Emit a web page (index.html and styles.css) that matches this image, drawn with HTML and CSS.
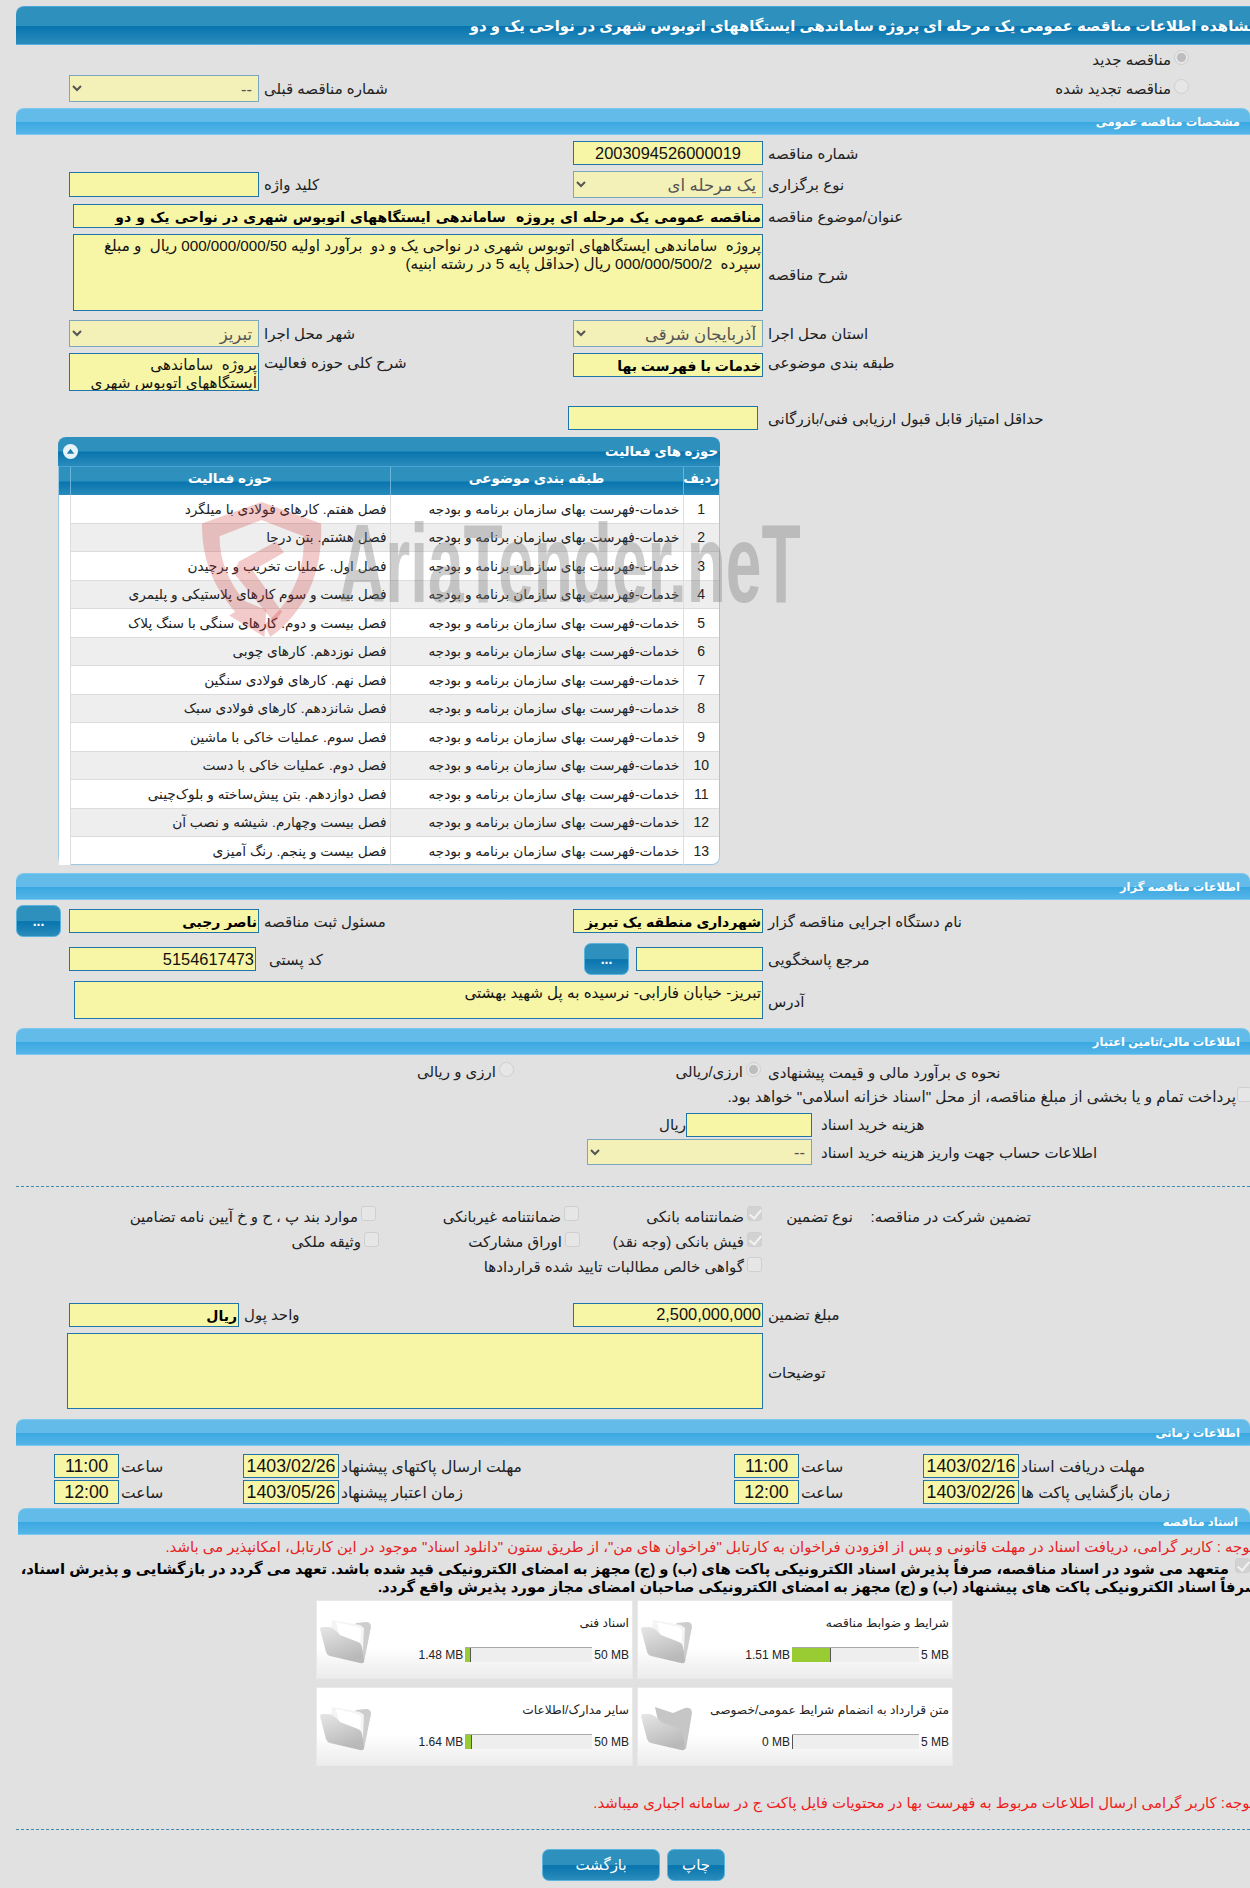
FILE: index.html
```html
<!DOCTYPE html>
<html lang="fa">
<head>
<meta charset="utf-8">
<title>مشاهده اطلاعات مناقصه</title>
<link rel="stylesheet" href="styles.css">
</head>
<body>
<div class="page">
  <h1 class="title-bar">مشاهده اطلاعات مناقصه عمومی یک مرحله ای پروژه ساماندهی ایستگاههای اتوبوس شهری در نواحی یک و دو</h1>

  <div class="top">
    <div class="top-prev">
      <select class="sel w190" disabled><option>--</option></select>
      <span class="lab">شماره مناقصه قبلی</span>
    </div>
    <div class="top-radios">
      <label class="opt"><input type="radio" class="rad" checked disabled><span>مناقصه جدید</span></label>
      <label class="opt"><input type="radio" class="rad" disabled><span>مناقصه تجدید شده</span></label>
    </div>
  </div>

  <h2 class="bar mt6">مشخصات مناقصه عمومی</h2>

  <div class="row h24 mt6">
    <span></span><span></span><span></span>
    <input class="inp center" value="2003094526000019" readonly>
    <span class="lab">شماره مناقصه</span>
  </div>
  <div class="row h27 mt6">
    <span></span>
    <input class="inp h25" readonly>
    <span class="lab">کلید واژه</span>
    <select class="sel" disabled><option>یک مرحله ای</option></select>
    <span class="lab">نوع برگزاری</span>
  </div>
  <div class="row h24 mt6">
    <span></span>
    <input class="inp bold long-title span3 ml4" value="مناقصه عمومی یک مرحله ای پروژه  ساماندهی ایستگاههای اتوبوس شهری در نواحی یک و دو" readonly>
    <span class="lab">عنوان/موضوع مناقصه</span>
  </div>
  <div class="row h77 mt6">
    <span></span>
    <textarea class="inp area span3 ml4" readonly>پروژه  ساماندهی ایستگاههای اتوبوس شهری در نواحی یک و دو  برآورد اولیه 000/000/000/50 ریال  و مبلغ سپرده  000/000/500/2 ریال (حداقل پایه 5 در رشته ابنیه)</textarea>
    <span class="lab lab-low">شرح مناقصه</span>
  </div>
  <div class="row h27 mt9">
    <span></span>
    <select class="sel" disabled><option>تبریز</option></select>
    <span class="lab">شهر محل اجرا</span>
    <select class="sel" disabled><option>آذربایجان شرقی</option></select>
    <span class="lab">استان محل اجرا</span>
  </div>
  <div class="row h38 mt6">
    <span></span>
    <textarea class="inp area" readonly>پروژه  ساماندهی
ایستگاههای اتوبوس شهری</textarea>
    <span class="lab top-lab">شرح کلی حوزه فعالیت</span>
    <input class="inp bold top-inp" value="خدمات با فهرست بها" readonly>
    <span class="lab top-lab">طبقه بندی موضوعی</span>
  </div>
  <div class="row h24 mt15">
    <span></span><span></span><span></span>
    <input class="inp shift5" readonly>
    <span class="lab">حداقل امتیاز قابل قبول ارزیابی فنی/بازرگانی</span>
  </div>

  <section class="panel">
    <div class="panel-title">
      <span class="collapse"><svg viewBox="0 0 14 14" width="15" height="15"><circle cx="7" cy="7" r="7" fill="#e8f3f8"/><path d="M3.5 9 7 4.5 10.5 9z" fill="#1b7fb2"/></svg></span>
      <span>حوزه های فعالیت</span>
    </div>
    <table class="grid">
      <colgroup><col class="c-blank"><col class="c-act"><col class="c-cat"><col class="c-num"></colgroup>
      <thead><tr><th></th><th>حوزه فعالیت</th><th>طبقه بندی موضوعی</th><th>ردیف</th></tr></thead>
      <tbody>
        <tr><td></td><td>فصل هفتم. کارهای فولادی با میلگرد</td><td>خدمات-فهرست بهای سازمان برنامه و بودجه</td><td class="num">1</td></tr>
        <tr><td></td><td>فصل هشتم. بتن درجا</td><td>خدمات-فهرست بهای سازمان برنامه و بودجه</td><td class="num">2</td></tr>
        <tr><td></td><td>فصل اول. عملیات تخریب و برچیدن</td><td>خدمات-فهرست بهای سازمان برنامه و بودجه</td><td class="num">3</td></tr>
        <tr><td></td><td>فصل بیست و سوم کارهای پلاستیکی و پلیمری</td><td>خدمات-فهرست بهای سازمان برنامه و بودجه</td><td class="num">4</td></tr>
        <tr><td></td><td>فصل بیست و دوم. کارهای سنگی با سنگ پلاک</td><td>خدمات-فهرست بهای سازمان برنامه و بودجه</td><td class="num">5</td></tr>
        <tr><td></td><td>فصل نوزدهم. کارهای چوبی</td><td>خدمات-فهرست بهای سازمان برنامه و بودجه</td><td class="num">6</td></tr>
        <tr><td></td><td>فصل نهم. کارهای فولادی سنگین</td><td>خدمات-فهرست بهای سازمان برنامه و بودجه</td><td class="num">7</td></tr>
        <tr><td></td><td>فصل شانزدهم. کارهای فولادی سبک</td><td>خدمات-فهرست بهای سازمان برنامه و بودجه</td><td class="num">8</td></tr>
        <tr><td></td><td>فصل سوم. عملیات خاکی با ماشین</td><td>خدمات-فهرست بهای سازمان برنامه و بودجه</td><td class="num">9</td></tr>
        <tr><td></td><td>فصل دوم. عملیات خاکی با دست</td><td>خدمات-فهرست بهای سازمان برنامه و بودجه</td><td class="num">10</td></tr>
        <tr><td></td><td>فصل دوازدهم. بتن پیش‌ساخته و بلوک‌چینی</td><td>خدمات-فهرست بهای سازمان برنامه و بودجه</td><td class="num">11</td></tr>
        <tr><td></td><td>فصل بیست وچهارم. شیشه و نصب آن</td><td>خدمات-فهرست بهای سازمان برنامه و بودجه</td><td class="num">12</td></tr>
        <tr><td></td><td>فصل بیست و پنجم. رنگ آمیزی</td><td>خدمات-فهرست بهای سازمان برنامه و بودجه</td><td class="num">13</td></tr>
      </tbody>
    </table>
    <div class="watermark" aria-hidden="true">
      <svg class="wm-shield" viewBox="0 0 126 150" width="123" height="135" preserveAspectRatio="none"><path d="M63 0 124 24C126 75 110 120 72 150L66 136C96 110 108 72 106 38L63 20 20 38C20 66 30 90 46 110L68 120 66 150 30 126 36 122C12 92 2 62 2 24Z" fill="#c33" opacity=".26"/><path d="M40 66 78 44 86 56 54 76 84 122 76 134 34 78Z" fill="#c33" opacity=".26"/></svg>
      <span class="wm-text">AriaTender.neT</span>
    </div>
  </section>

  <h2 class="bar mt8">اطلاعات مناقصه گزار</h2>

  <div class="row h32 mt5">
    <button class="btn dots" type="button">...</button>
    <input class="inp bold" value="ناصر رجبی" readonly>
    <span class="lab">مسئول ثبت مناقصه</span>
    <input class="inp bold" value="شهرداری منطقه یک تبریز" readonly>
    <span class="lab">نام دستگاه اجرایی مناقصه گزار</span>
  </div>
  <div class="row h32 mt6">
    <span></span>
    <input class="inp w187" value="5154617473" readonly>
    <span class="lab pl8">کد پستی</span>
    <div class="ref-wrap">
      <button class="btn dots" type="button">...</button>
      <input class="inp w127" readonly>
    </div>
    <span class="lab">مرجع پاسخگویی</span>
  </div>
  <div class="row h38 mt6">
    <span></span>
    <textarea class="inp area span3 ml5" readonly>تبریز- خیابان فارابی- نرسیده به پل شهید بهشتی</textarea>
    <span class="lab lab-low">آدرس</span>
  </div>

  <h2 class="bar mt9">اطلاعات مالی/تامین اعتبار</h2>

  <div class="fin-row">
    <label class="opt fin-a"><input type="radio" class="rad" disabled><span>ارزی و ریالی</span></label>
    <label class="opt fin-b"><input type="radio" class="rad" checked disabled><span>ارزی/ریالی</span></label>
    <span class="lab">نحوه ی برآورد مالی و قیمت پیشنهادی</span>
  </div>
  <div class="treasury">
    <input type="checkbox" class="chk" disabled>
    <span>پرداخت تمام و یا بخشی از مبلغ مناقصه، از محل "اسناد خزانه اسلامی" خواهد بود.</span>
  </div>
  <div class="fee-row mt12">
    <span class="unit">ریال</span>
    <input class="inp w126" readonly>
    <span class="lab pl9">هزینه خرید اسناد</span>
  </div>
  <div class="acc-row">
    <select class="sel w225" disabled><option>--</option></select>
    <span class="lab pl9">اطلاعات حساب جهت واریز هزینه خرید اسناد</span>
  </div>

  <hr class="dash dash-a">

  <div class="guar">
    <span>تضمین شرکت در مناقصه:</span>
    <span>نوع تضمین</span>
    <label class="opt"><input type="checkbox" class="chk" checked disabled><span>ضمانتنامه بانکی</span></label>
    <label class="opt"><input type="checkbox" class="chk" disabled><span>ضمانتنامه غیربانکی</span></label>
    <label class="opt"><input type="checkbox" class="chk" disabled><span>موارد بند پ ، ح و خ آیین نامه تضامین</span></label>
  </div>
  <div class="guar">
    <span></span><span></span>
    <label class="opt"><input type="checkbox" class="chk" checked disabled><span>فیش بانکی (وجه نقد)</span></label>
    <label class="opt nudge1"><input type="checkbox" class="chk" disabled><span>اوراق مشارکت</span></label>
    <label class="opt nudge3"><input type="checkbox" class="chk" disabled><span>وثیقه ملکی</span></label>
  </div>
  <div class="guar">
    <span></span><span></span>
    <label class="opt wide"><input type="checkbox" class="chk" disabled><span>گواهی خالص مطالبات تایید شده قراردادها</span></label>
  </div>

  <div class="row h25 mt22">
    <span></span>
    <input class="inp bold w170" value="ریال" readonly>
    <span class="lab pull20">واحد پول</span>
    <input class="inp" value="2,500,000,000" readonly>
    <span class="lab">مبلغ تضمین</span>
  </div>
  <div class="row h76 mt6">
    <span></span>
    <textarea class="inp area span3 desc" readonly></textarea>
    <span class="lab lab-low">توضیحات</span>
  </div>

  <h2 class="bar mt10">اطلاعات زمانی</h2>

  <div class="time-row mt8">
    <input class="inp center" value="11:00" readonly><span class="lab">ساعت</span>
    <input class="inp center" value="1403/02/26" readonly><span class="lab">مهلت ارسال پاکتهای پیشنهاد</span>
    <input class="inp center" value="11:00" readonly><span class="lab">ساعت</span>
    <input class="inp center" value="1403/02/16" readonly><span class="lab">مهلت دریافت اسناد</span>
  </div>
  <div class="time-row mt2">
    <input class="inp center" value="12:00" readonly><span class="lab">ساعت</span>
    <input class="inp center" value="1403/05/26" readonly><span class="lab">زمان اعتبار پیشنهاد</span>
    <input class="inp center" value="12:00" readonly><span class="lab">ساعت</span>
    <input class="inp center" value="1403/02/26" readonly><span class="lab">زمان بازگشایی پاکت ها</span>
  </div>

  <h2 class="bar bar-docs">اسناد مناقصه</h2>

  <p class="note red-a">توجه : کاربر گرامی، دریافت اسناد در مهلت قانونی و پس از افزودن فراخوان به کارتابل "فراخوان های من"، از طریق ستون "دانلود اسناد" موجود در این کارتابل، امکانپذیر می باشد.</p>
  <div class="pledge">
    <input type="checkbox" class="chk" checked disabled>
    <span>متعهد می شود در اسناد مناقصه، صرفاً پذیرش اسناد الکترونیکی پاکت های (ب) و (ج) مجهز به امضای الکترونیکی قید شده باشد. تعهد می گردد در بازگشایی و پذیرش اسناد،</span>
  </div>
  <p class="note pledge-2">صرفاً اسناد الکترونیکی پاکت های پیشنهاد (ب) و (ج) مجهز به امضای الکترونیکی صاحبان امضای مجاز مورد پذیرش واقع گردد.</p>

  <div class="files">
    <article class="card">
      <svg class="folder" viewBox="0 0 52 46" width="52" height="46"><use href="#folder-full"/></svg>
      <div class="card-body">
        <div class="card-title">اسناد فنی</div>
        <div class="prog"><span>1.48 MB</span><span class="track"><span class="fill f1"></span></span><span>50 MB</span></div>
      </div>
    </article>
    <article class="card">
      <svg class="folder" viewBox="0 0 52 46" width="52" height="46"><use href="#folder-full"/></svg>
      <div class="card-body">
        <div class="card-title">شرایط و ضوابط مناقصه</div>
        <div class="prog"><span>1.51 MB</span><span class="track"><span class="fill f2"></span></span><span>5 MB</span></div>
      </div>
    </article>
    <article class="card">
      <svg class="folder" viewBox="0 0 52 46" width="52" height="46"><use href="#folder-full"/></svg>
      <div class="card-body">
        <div class="card-title">سایر مدارک/اطلاعات</div>
        <div class="prog"><span>1.64 MB</span><span class="track"><span class="fill f3"></span></span><span>50 MB</span></div>
      </div>
    </article>
    <article class="card">
      <svg class="folder" viewBox="0 0 52 46" width="52" height="46"><use href="#folder-empty"/></svg>
      <div class="card-body">
        <div class="card-title">متن قرارداد به انضمام شرایط عمومی/خصوصی</div>
        <div class="prog"><span>0 MB</span><span class="track"><span class="fill f0"></span></span><span>5 MB</span></div>
      </div>
    </article>
  </div>

  <p class="note red-b">توجه: کاربر گرامی ارسال اطلاعات مربوط به فهرست بها در محتویات فایل پاکت ج در سامانه اجباری میباشد.</p>

  <hr class="dash dash-b">

  <div class="actions">
    <button class="btn act-back" type="button">بازگشت</button>
    <button class="btn act-print" type="button">چاپ</button>
  </div>
</div>

<svg class="defs" width="0" height="0" aria-hidden="true">
  <defs>
    <linearGradient id="fg" x1="0" y1="0" x2="0.4" y2="1"><stop offset="0" stop-color="#e6e6e6"/><stop offset="1" stop-color="#b9b9b9"/></linearGradient>
    <symbol id="folder-full" viewBox="0 0 52 46">
      <path d="M36 5 46 4Q51 4 51 9L44 44 20 30Z" fill="#cdcdcd"/>
      <path d="M12 2 40 7 44 10 43 32 30 40 10 20Z" fill="#f4f4f4"/>
      <path d="M16 4 38 9 41 12 40 30 20 20Z" fill="#fff"/>
      <path d="M0 11Q0 9 3 9L9 9Q14 10 20 17L38 24Q41 25 42 29L44 43Q44 46 40 45L10 38Q7 37 6 34Z" fill="url(#fg)"/>
    </symbol>
    <symbol id="folder-empty" viewBox="0 0 52 46">
      <path d="M14 2 32 8 44 3Q51 2 51 8L45 44 20 30Z" fill="#c6c6c6"/>
      <path d="M0 11Q0 9 3 9L9 9Q14 10 20 17L38 24Q41 25 42 29L44 43Q44 46 40 45L10 38Q7 37 6 34Z" fill="url(#fg)"/>
    </symbol>
  </defs>
</svg>
</body>
</html>
```

FILE: styles.css
```css
* { box-sizing: border-box; }
html, body { margin: 0; padding: 0; background: #e1e1e1; }
body { font-family: "Liberation Sans", "DejaVu Sans", sans-serif; font-size: 15px; color: #222; }
.page { position: relative; width: 1250px; height: 1888px; overflow: hidden; padding-top: 6px; background: #e1e1e1; }
p, h1, h2 { margin: 0; }

.title-bar {
  width: 1250px; height: 39px; margin-left: 16px; padding: 0 8px 0 0;
  direction: rtl; white-space: nowrap; line-height: 38px;
  font-size: 14.85px; font-weight: bold; color: #fff;
  border-top-left-radius: 8px; border-top: 1px solid #4aa6d6; border-bottom: 1px solid #57afe0;
  background: linear-gradient(#2e90bd 0, #2e90bd 50%, #0874ae 52%, #2a8cbb 100%);
}
.bar {
  width: 1234px; height: 27px; margin-left: 16px; padding: 0 10px;
  direction: rtl; line-height: 27px; font-size: 11.5px; font-weight: bold; color: #fff;
  border-radius: 8px 8px 0 0; border-top: 1px solid #7cc8ee; border-bottom: 1px solid #7cc8ee;
  background: linear-gradient(#63bbe9 0, #63bbe9 50%, #3aa8e1 53%, #55b5e8 100%);
}
.bar-docs { width: 1232px; margin-left: 18px; margin-top: 4px; padding-right: 12px; }

.mt2 { margin-top: 2px; } .mt5 { margin-top: 5px; } .mt6 { margin-top: 6px; } .mt8 { margin-top: 8px; }
.mt9 { margin-top: 9px; } .mt10 { margin-top: 10px; } .mt12 { margin-top: 12px; } .mt15 { margin-top: 15px; } .mt22 { margin-top: 22px; }

.lab { direction: rtl; text-align: left; white-space: nowrap; padding: 1px 0 0 5px; font-size: 15px; color: #222; unicode-bidi: plaintext; }
.lab-low { padding-top: 4px; }
.pull20 { margin-left: -20px; }
.row {
  display: grid; grid-template-columns: 53px 190px 314px 190px 1fr;
  margin-left: 16px; align-items: center;
}
.h24 { height: 24px; } .h25 { height: 25px; } .h27 { height: 27px; } .h32 { height: 32px; } .h38 { height: 38px; } .h76 { height: 76px; } .h77 { height: 77px; }

.inp {
  display: block; width: 100%; height: 24px; margin: 0; padding: 0 1px;
  direction: rtl; font: 16.4px "Liberation Sans", "DejaVu Sans", sans-serif; color: #111;
  background: #f7f5a6; border: 1px solid #1f75aa; border-radius: 0; outline: 0;
}
.row > .inp.h25 { height: 25px; }
.bold { font-weight: bold; color: #000; font-size: 14px; padding-top: 2px; }
.long-title { word-spacing: 1.2px; }
.center { text-align: center; direction: ltr; }
.area { height: 100%; resize: none; overflow: hidden; font-size: 15.2px; line-height: 18px; padding-top: 2px; }
.span3 { grid-column: span 3; width: auto; }
.row > .span3 { justify-self: stretch; }
.ml4 { margin-left: 4px; } .ml5 { margin-left: 5px; }
.desc { margin-left: -2px; }
.shift5 { margin-left: -5px; width: 190px; }
.w187 { width: 187px; } .w170 { width: 170px; } .w126 { width: 126px; } .w127 { width: 127px; }
.top-lab { align-self: start; padding-top: 1px; }
.top-inp { align-self: start; }
.pl8 { padding-left: 10px; } .pl9 { padding-left: 9px; }

.sel {
  display: block; width: 100%; height: 27px; margin: 0; padding: 0 2px;
  direction: rtl; font: 16.5px "Liberation Sans", "DejaVu Sans", sans-serif; color: #555; opacity: 1;
  background-color: #f3f0b8; border: 1px solid #7ba6bf; border-radius: 0;
}
.sel.w190 { width: 190px; } .sel.w225 { width: 225px; }

.rad, .chk {
  appearance: none; -webkit-appearance: none; flex: none; position: relative; margin: 0;
  width: 15px; height: 15px; background: #e6e6e6; border: 1px solid #cfcfcf;
}
.rad { border-radius: 50%; top: -3px; }
.rad:checked::after { content: ""; position: absolute; left: 2px; top: 2px; width: 9px; height: 9px; border-radius: 50%; background: #bdbdbd; }
.chk { border-radius: 3px; top: -3px; }
.chk:checked { background: #d2d2d2; }
.chk:checked::after { content: ""; position: absolute; left: 4px; top: 0; width: 5px; height: 10px; border: solid #f2f2f2; border-width: 0 2px 2px 0; transform: rotate(40deg); }
.opt { display: inline-flex; align-items: center; gap: 3px; direction: rtl; white-space: nowrap; font-size: 15px; }

.top { display: flex; justify-content: space-between; align-items: flex-end; height: 49px; margin-top: 8px; padding-left: 69px; }
.top-prev { display: flex; align-items: center; }
.top-radios { display: flex; flex-direction: column; align-items: flex-start; gap: 11px; direction: rtl; padding-right: 61px; padding-bottom: 4px; }

.panel { position: relative; width: 662px; height: 428px; margin: 7px 0 0 58px; border: 1px solid #9cc9e4; border-top: 0; border-radius: 8px; background: #fff; }
.panel-title {
  display: flex; justify-content: space-between; align-items: center; height: 29px; margin: 0 -1px; padding: 0 2px 0 5px;
  font-size: 13.3px; font-weight: bold; color: #fff; direction: ltr;
  border-radius: 8px 8px 0 0; background: linear-gradient(#2e90bd 0, #2e90bd 48%, #0874ae 52%, #2a8cbb 100%);
}
.panel-title > span:last-child { direction: rtl; }
.collapse { display: flex; }
.grid { width: 660px; table-layout: fixed; border-collapse: collapse; direction: ltr; }
.c-blank { width: 11px; } .c-act { width: 320px; } .c-cat { width: 293px; } .c-num { width: 36px; }
.grid th {
  height: 28px; padding: 0 0 5px; direction: rtl; color: #fff; font-size: 13.5px; font-weight: bold; text-align: center;
  border-left: 1px solid #6ab2d8; border-top: 1px solid #4aa6d6;
  background: linear-gradient(#2e90bd 0, #2e90bd 48%, #0874ae 52%, #2a8cbb 100%);
}
.grid th:first-child { border-left: 0; }
.grid td { height: 28.5px; padding: 0 3px; direction: rtl; text-align: right; white-space: nowrap; overflow: hidden; font-size: 13.7px; color: #222; border-left: 1px solid #dedede; border-bottom: 1px solid #dcdcdc; }
.grid tbody tr:nth-child(even) td { background: #eeeeee; }
.grid tbody tr td:first-child { background: #fff; border-left: 0; border-bottom: 0; }
.grid td.num { text-align: center; font-size: 14px; }
.watermark { position: absolute; left: 141px; top: 65px; width: 620px; height: 150px; pointer-events: none; }
.wm-shield { position: absolute; left: 0; top: 0; }
.wm-text { position: absolute; left: 139px; top: 6px; font: bold 112px/1 "Liberation Sans Narrow", "Liberation Sans", sans-serif; color: rgba(120,120,120,.36); white-space: nowrap; transform: scaleX(.572); transform-origin: 0 0; }

.btn {
  height: 32px; padding: 0; font: 13px "Liberation Sans", "DejaVu Sans", sans-serif; color: #fff; border: 1px solid #5bb4de; border-radius: 7px;
  background: linear-gradient(#2e90bd 0, #2e90bd 50%, #0874ae 52%, #2a8cbb 100%);
}
.dots { width: 45px; font-weight: bold; font-size: 14px; flex: none; }
.ref-wrap { display: flex; align-items: center; gap: 7px; padding-left: 11px; }

.fin-row { display: flex; align-items: center; height: 20px; margin-top: 7px; }
.fin-a { width: 94px; margin-left: 420px; justify-content: flex-start; }
.fin-b { width: 83px; margin-left: 164px; margin-right: 7px; }
.fin-row .lab { padding-left: 0; }
.treasury { display: flex; align-items: center; gap: 1px; direction: rtl; height: 20px; margin-top: 5px; margin-right: -2px; white-space: nowrap; font-size: 15.3px; }
.fee-row, .acc-row { display: flex; align-items: center; }
.fee-row { height: 25px; margin-top: 5px; padding-left: 662px; }
.unit { width: 24px; direction: rtl; white-space: nowrap; }
.acc-row { height: 26px; margin-top: 2px; padding-left: 587px; }
.acc-row .sel { height: 26px; }

.dash { height: 0; margin: 0 0 0 16px; border: 0; border-top: 1px dashed #3f88b4; }
.dash-a { margin-top: 21px; }
.dash-b { margin-top: 16px; }

.guar {
  display: grid; grid-template-columns: 178px 91px 183px 203px 1fr; direction: rtl; align-items: center;
  height: 25.4px; padding-right: 219px; white-space: nowrap;
}
.dash-a + .guar { margin-top: 17px; }
.nudge1 { margin-right: -1px; } .nudge3 { margin-right: -3px; }
.wide { grid-column: span 3; }

.time-row { display: grid; grid-template-columns: 65px 124px 96px 395px 65px 124px 96px 1fr; align-items: center; padding-left: 54px; height: 24px; }
.time-row .lab { padding-left: 2px; font-size: 15.5px; }
.time-row .inp { height: 24px; font-size: 17.8px; }

.note { direction: rtl; white-space: nowrap; font-size: 14.9px; }
.red-a { width: 1254px; height: 22px; margin-top: 1px; line-height: 22px; color: #e62222; }
.pledge { display: flex; align-items: center; gap: 6px; direction: rtl; height: 20px; font-size: 14.8px; font-weight: bold; color: #000; white-space: nowrap; }
.pledge-2 { width: 1259px; height: 20px; line-height: 18px; font-size: 14.8px; font-weight: bold; color: #000; }

.files { display: grid; grid-template-columns: 317px 316px; grid-auto-rows: 79px; gap: 8px 4px; margin: 2px 0 0 316px; }
.card { display: flex; background: linear-gradient(#fff 0, #fff 60%, #ececec 100%); border: 1px solid #e9e9e9; }
.folder { flex: none; margin: 17px 0 0 3px; }
.card-body { flex: 1; min-width: 0; padding: 13px 3px 0 0; }
.card-title { height: 18px; line-height: 18px; direction: rtl; white-space: nowrap; font-size: 12.2px; color: #222; }
.prog { display: flex; justify-content: flex-end; align-items: center; gap: 2px; height: 15px; margin-top: 15px; font-size: 12px; color: #222; white-space: nowrap; }
.track { display: block; width: 127px; height: 15px; background: #eee; border-top: 1px solid #aaa; }
.fill { display: block; height: 14px; background: #9c3; border-right: 1px solid #555; }
.f0 { width: 1px; } .f1 { width: 6px; } .f2 { width: 39px; } .f3 { width: 7px; }

.red-b { width: 1254px; height: 20px; margin-top: 27px; line-height: 20px; color: #f01c1c; }

.actions { display: flex; justify-content: flex-start; gap: 7px; margin: 19px 0 0 542px; }
.act-back, .act-print { display: block; }
.act-back { width: 118px; height: 32px; font-size: 15px; }
.act-print { width: 58px; height: 32px; font-size: 15px; }
.defs { position: absolute; }
```
